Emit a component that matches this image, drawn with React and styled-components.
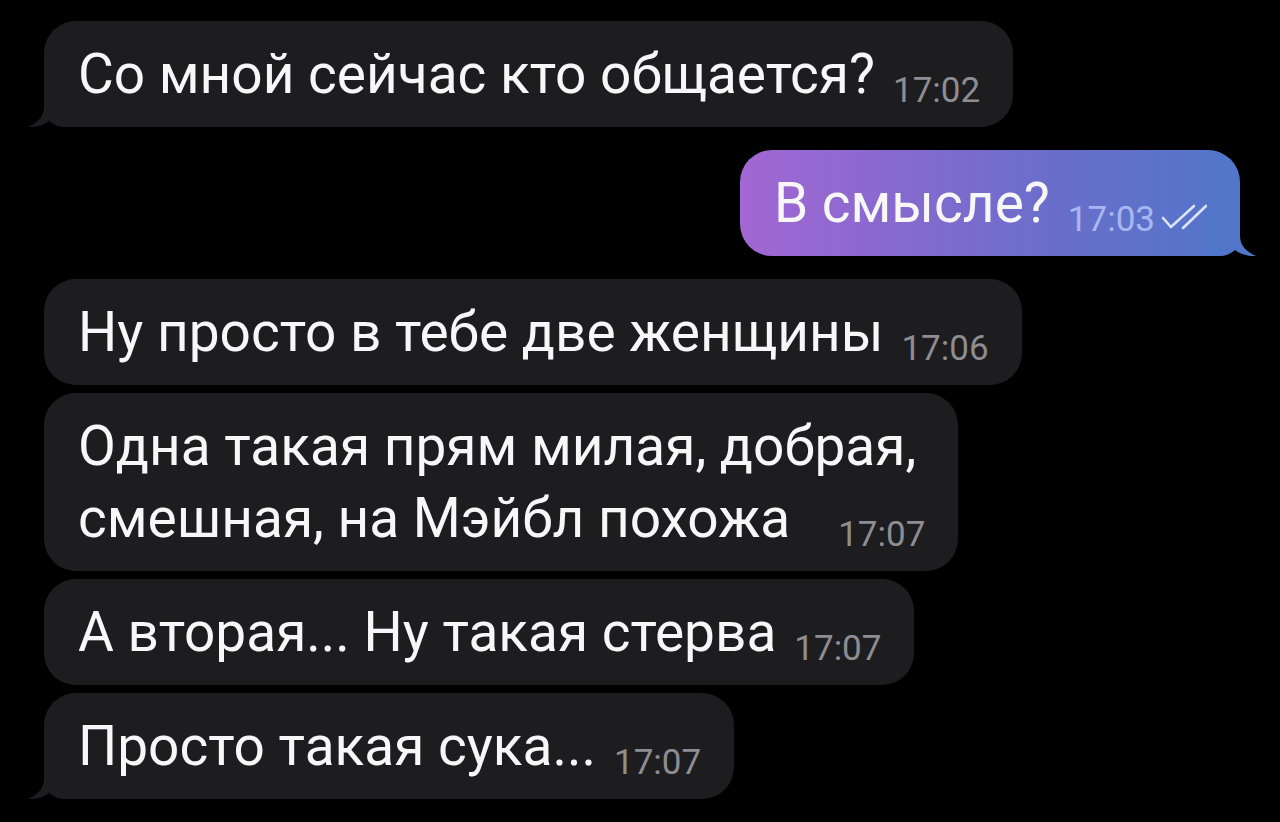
import { Fragment } from 'react';
import styled, { createGlobalStyle } from 'styled-components';

const GlobalStyle = createGlobalStyle`
  html, body {
    margin: 0;
    padding: 0;
    background: #000;
  }
  body {
    font-family: Roboto, "Noto Sans", sans-serif;
    -webkit-font-smoothing: antialiased;
  }
`;

const Screen = styled.div`
  width: 1280px;
  height: 822px;
  background: #000;
  box-sizing: border-box;
  padding: 21px 40px 0 44px;
  display: flex;
  flex-direction: column;
  overflow: hidden;
`;

const Group = styled.div`
  display: flex;
  flex-direction: column;
  align-items: ${(p) => (p.$out ? 'flex-end' : 'flex-start')};
  gap: 8px;
  margin-bottom: 23px;
`;

const Bubble = styled.div`
  position: relative;
  box-sizing: border-box;
  max-width: 1000px;
  padding: 17px 33px 17px 34px;
  border-radius: 32px;
  ${(p) => p.$tail && (p.$out ? 'border-bottom-right-radius: 20px;' : 'border-bottom-left-radius: 20px;')}
  background: ${(p) =>
    p.$out
      ? 'linear-gradient(90deg, #a267d3 0%, #8869cf 30%, #6a6ecb 62%, #5176c9 100%)'
      : '#1d1c1f'};
  color: #f7f7f7;
  font-size: 55px;
  line-height: 72px;
  display: flow-root;
`;

const Meta = styled.span`
  float: right;
  display: flex;
  align-items: center;
  gap: 6px;
  margin: 34px 0 0 ${(p) => (p.$wide ? '48px' : '18px')};
  font-size: 35px;
  line-height: 38px;
  color: ${(p) => (p.$out ? 'rgba(185, 200, 250, 0.82)' : '#8e8d92')};
  white-space: nowrap;
`;

const TailSvg = styled.svg`
  position: absolute;
  bottom: 0;
  ${(p) => (p.$out ? 'right: -16px; transform: scaleX(-1);' : 'left: -16px;')}
  width: 50px;
  height: 42px;
  pointer-events: none;
`;

const Checks = styled.svg`
  width: 46px;
  height: 26px;
  margin-top: -6px;
`;

function Tail({ out }) {
  return (
    <TailSvg $out={out} viewBox="0 0 50 42">
      <path
        d="M16 0 L16 22 C16 32 9 38 0 42 C9 42.5 16 40 21 36 C26 40 34 42 50 42 L50 0 Z"
        fill={out ? '#5176c9' : '#1d1c1f'}
      />
    </TailSvg>
  );
}

function DoubleCheck() {
  return (
    <Checks viewBox="0 0 46 26">
      <g stroke="rgba(235, 240, 255, 0.9)" strokeWidth="2.6" fill="none" strokeLinecap="round">
        <path d="M2 14 L10 23 L33 2" />
        <path d="M22 24 L45 2" />
      </g>
    </Checks>
  );
}

function Message({ lines, time, out, tail }) {
  return (
    <Bubble $out={out} $tail={tail}>
      {lines.map((line, i) => (
        <Fragment key={i}>
          {i > 0 && <br />}
          {line}
        </Fragment>
      ))}
      <Meta $out={out} $wide={lines.length > 1}>
        {time}
        {out && <DoubleCheck />}
      </Meta>
      {tail && <Tail out={out} />}
    </Bubble>
  );
}

const groups = [
  {
    out: false,
    messages: [{ lines: ['Со мной сейчас кто общается?'], time: '17:02' }],
  },
  {
    out: true,
    messages: [{ lines: ['В смысле?'], time: '17:03' }],
  },
  {
    out: false,
    messages: [
      { lines: ['Ну просто в тебе две женщины'], time: '17:06' },
      { lines: ['Одна такая прям милая, добрая,', 'смешная, на Мэйбл похожа'], time: '17:07' },
      { lines: ['А вторая... Ну такая стерва'], time: '17:07' },
      { lines: ['Просто такая сука...'], time: '17:07' },
    ],
  },
];

export default function App() {
  return (
    <>
      <GlobalStyle />
      <Screen>
        {groups.map((g, gi) => (
          <Group key={gi} $out={g.out}>
            {g.messages.map((m, mi) => (
              <Message
                key={mi}
                lines={m.lines}
                time={m.time}
                out={g.out}
                tail={mi === g.messages.length - 1}
              />
            ))}
          </Group>
        ))}
      </Screen>
    </>
  );
}
